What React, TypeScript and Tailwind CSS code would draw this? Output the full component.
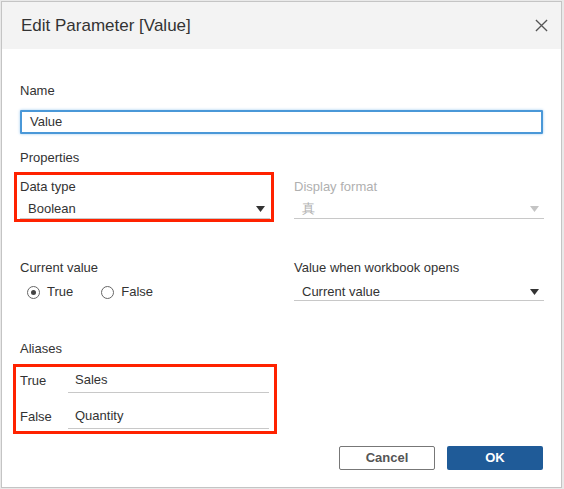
import React from 'react'

const FONT = { fontFamily: '"Liberation Sans", Arial, sans-serif' }

function Caret({ disabled }: { disabled?: boolean }) {
  return (
    <svg width="9" height="6" viewBox="0 0 9 6" className="shrink-0">
      <path d="M0 0 L9 0 L4.5 6 Z" fill={disabled ? '#c4c4c4' : '#333333'} />
    </svg>
  )
}

function Select({ value, disabled, short }: { value: string; disabled?: boolean; short?: boolean }) {
  return (
    <div
      className={`flex items-center justify-between border-b border-[#c8c8c8] pl-[8px] pr-[5px] ${short ? 'h-[18px]' : 'h-[22px] pt-[3px]'}`}
    >
      <span className={disabled ? 'text-[#b0b0b0]' : 'text-[#333]'}>{value}</span>
      <Caret disabled={disabled} />
    </div>
  )
}

function Radio({ label, checked }: { label: string; checked?: boolean }) {
  return (
    <label className="flex items-center gap-[7px]">
      <span className="flex h-[13px] w-[13px] items-center justify-center rounded-full border border-[#666]">
        {checked && <span className="h-[5px] w-[5px] rounded-full bg-[#444]" />}
      </span>
      <span>{label}</span>
    </label>
  )
}

function AliasRow({ label, value }: { label: string; value: string }) {
  return (
    <div className="flex items-end">
      <span className="w-[48px] pb-[4px]">{label}</span>
      <div className="h-[24px] w-[201px] border-b border-[#c8c8c8] pl-[7px] leading-[22px]">{value}</div>
    </div>
  )
}

export default function App() {
  return (
    <div className="h-[489px] w-[564px] bg-[#e9e9e9] pl-px pt-px" style={FONT}>
      <div className="flex h-[487px] w-[561px] flex-col border border-[#c4c4c4] bg-white text-[13px] leading-[16px] text-[#333]">
        <div className="flex h-[47px] shrink-0 items-center justify-between bg-[#f3f3f3] pl-[19px] pr-[13px]">
          <h1 className="text-[17px] text-[#333]">Edit Parameter [Value]</h1>
          <svg width="13" height="13" viewBox="0 0 14 14">
            <path d="M1 1 L13 13 M13 1 L1 13" stroke="#555" strokeWidth="1.4" />
          </svg>
        </div>

        <div className="flex flex-1 flex-col px-[18px]">
          <div className="mt-[34px]">Name</div>
          <div className="mt-[11px] h-[24px] rounded-[1px] border-2 border-[#4a98d8] pl-[8px] leading-[20px] shadow-[0_0_3px_#9cc8ef]">
            Value
          </div>

          <div className="mt-[16px]">Properties</div>

          <div className="mt-[13px] grid grid-cols-[250px_250px] gap-x-[24px]">
            <div className="relative">
              <span className="pointer-events-none absolute -left-[6px] -right-[4px] -top-[7px] -bottom-[3px] border-[3px] border-[#ff2200]" />
              <div>Data type</div>
              <div className="mt-[2px]">
                <Select value="Boolean" />
              </div>
            </div>
            <div className="text-[#b0b0b0]">
              <div>Display format</div>
              <div className="mt-[2px]">
                <Select value="真" disabled />
              </div>
            </div>
          </div>

          <div className="mt-[41px] grid grid-cols-[250px_250px] gap-x-[24px]">
            <div>
              <div>Current value</div>
              <div className="mt-[8px] flex gap-[28px] pl-[7px]">
                <Radio label="True" checked />
                <Radio label="False" />
              </div>
            </div>
            <div>
              <div>Value when workbook opens</div>
              <div className="mt-[7px]">
                <Select value="Current value" short />
              </div>
            </div>
          </div>

          <div className="mt-[40px]">Aliases</div>

          <div className="relative mt-[12px] flex w-[250px] flex-col gap-[12px]">
            <span className="pointer-events-none absolute -left-[7px] -right-[7px] -top-[5px] -bottom-[5px] border-[3px] border-[#ff2200]" />
            <AliasRow label="True" value="Sales" />
            <AliasRow label="False" value="Quantity" />
          </div>

          <div className="mt-auto mb-[17px] flex justify-end gap-[12px]">
            <button
              type="button"
              className="h-[24px] w-[96px] rounded-[2px] border border-[#777] bg-white font-bold text-[#555]"
            >
              Cancel
            </button>
            <button type="button" className="h-[24px] w-[96px] rounded-[2px] bg-[#1f5b98] font-bold text-white">
              OK
            </button>
          </div>
        </div>
      </div>
    </div>
  )
}
